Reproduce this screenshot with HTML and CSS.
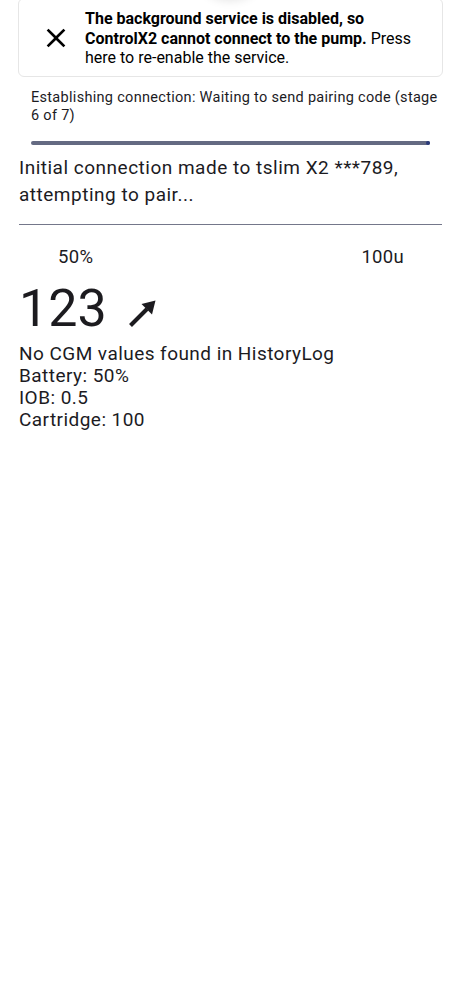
FILE: index.html
```html
<!DOCTYPE html>
<html>
<head>
<meta charset="utf-8">
<link rel="stylesheet" href="styles.css">
</head>
<body>
<div class="refresh-shadow"></div>
<main class="page">
  <div class="notice">
    <svg class="close-icon" viewBox="0 0 24 24" width="32" height="32"><path d="M19 6.41 17.59 5 12 10.59 6.41 5 5 6.41 10.59 12 5 17.59 6.41 19 12 13.41 17.59 19 19 17.59 13.41 12z" fill="#000"/></svg>
    <p class="notice-text"><b>The background service is disabled, so ControlX2 cannot connect to the pump.</b> Press here to re-enable the service.</p>
  </div>
  <div class="status">
    <p class="status-text">Establishing connection: Waiting to send pairing code (stage 6 of 7)</p>
    <div class="progress"><span class="progress-dot"></span></div>
  </div>
  <p class="initial">Initial connection made to tslim X2 ***789, attempting to pair...</p>
  <hr class="divider">
  <div class="levels">
    <span>50%</span>
    <span>100u</span>
  </div>
  <div class="cgm">
    <span class="cgm-value">123</span>
    <svg class="trend" viewBox="0 0 30 30" width="30" height="30"><path d="M3.5 27.5 20 11" stroke="#1c1b1f" stroke-width="4" fill="none"/><path d="M28.5 2.5 14.5 6 25 16.5z" fill="#1c1b1f"/></svg>
  </div>
  <div class="details">
    <p>No CGM values found in HistoryLog</p>
    <p>Battery: 50%</p>
    <p>IOB: 0.5</p>
    <p>Cartridge: 100</p>
  </div>
</main>
</body>
</html>
```
FILE: styles.css
```css
html, body {
  margin: 0;
  padding: 0;
  background: #fff;
}
body {
  font-family: Roboto, "Noto Sans", sans-serif;
  color: #1c1b1f;
  position: relative;
  overflow: hidden;
  height: 1000px;
}
.refresh-shadow {
  position: absolute;
  left: 202px;
  top: -38px;
  width: 56px;
  height: 38px;
  border-radius: 50%;
  box-shadow: 0 1px 10px rgba(0,0,0,0.10);
  background: #fcfcfc;
  z-index: 2;
}
.page {
  padding: 0 19px;
}
.notice {
  margin-top: -2px;
  border: 1px solid #e6e6e6;
  border-radius: 6px;
  display: flex;
  align-items: center;
  padding: 10px 12px 8px 21px;
  gap: 13px;
  margin-right: -1px;
  margin-left: -1px;
}
.close-icon {
  flex: none;
}
.notice-text {
  margin: 0;
  font-size: 16px;
  line-height: 19.5px;
  color: #000;
}
.notice-text b {
  font-weight: 700;
}
.status {
  padding: 12px 0 0 12px;
}
.status-text {
  margin: 0;
  font-size: 14.5px;
  line-height: 18px;
  letter-spacing: 0.3px;
  color: #1c1b1f;
}
.progress {
  margin: 16px 12px 0 0;
  height: 4px;
  border-radius: 2px;
  background: #646a82;
  position: relative;
}
.progress-dot {
  position: absolute;
  right: 0;
  top: 0;
  width: 4px;
  height: 4px;
  border-radius: 50%;
  background: #2a3a7a;
}
.initial {
  margin: 9px 0 0;
  font-size: 19px;
  line-height: 27px;
  letter-spacing: 0.5px;
}
.divider {
  border: 0;
  border-top: 1px solid #74778a;
  margin: 16px 0 0;
}
.levels {
  display: flex;
  justify-content: space-between;
  padding: 20px 38px 0 39px;
  font-size: 18.5px;
  line-height: 24px;
  letter-spacing: 0.3px;
}
.cgm {
  display: flex;
  align-items: center;
  gap: 20px;
  margin-top: 8px;
}
.cgm-value {
  font-size: 52px;
  line-height: 64px;
  letter-spacing: 0;
}
.trend {
  flex: none;
  margin-top: 8px;
}
.details {
  margin-top: 2px;
}
.details p {
  margin: 0;
  font-size: 19px;
  line-height: 22.3px;
  letter-spacing: 0.45px;
}
```
